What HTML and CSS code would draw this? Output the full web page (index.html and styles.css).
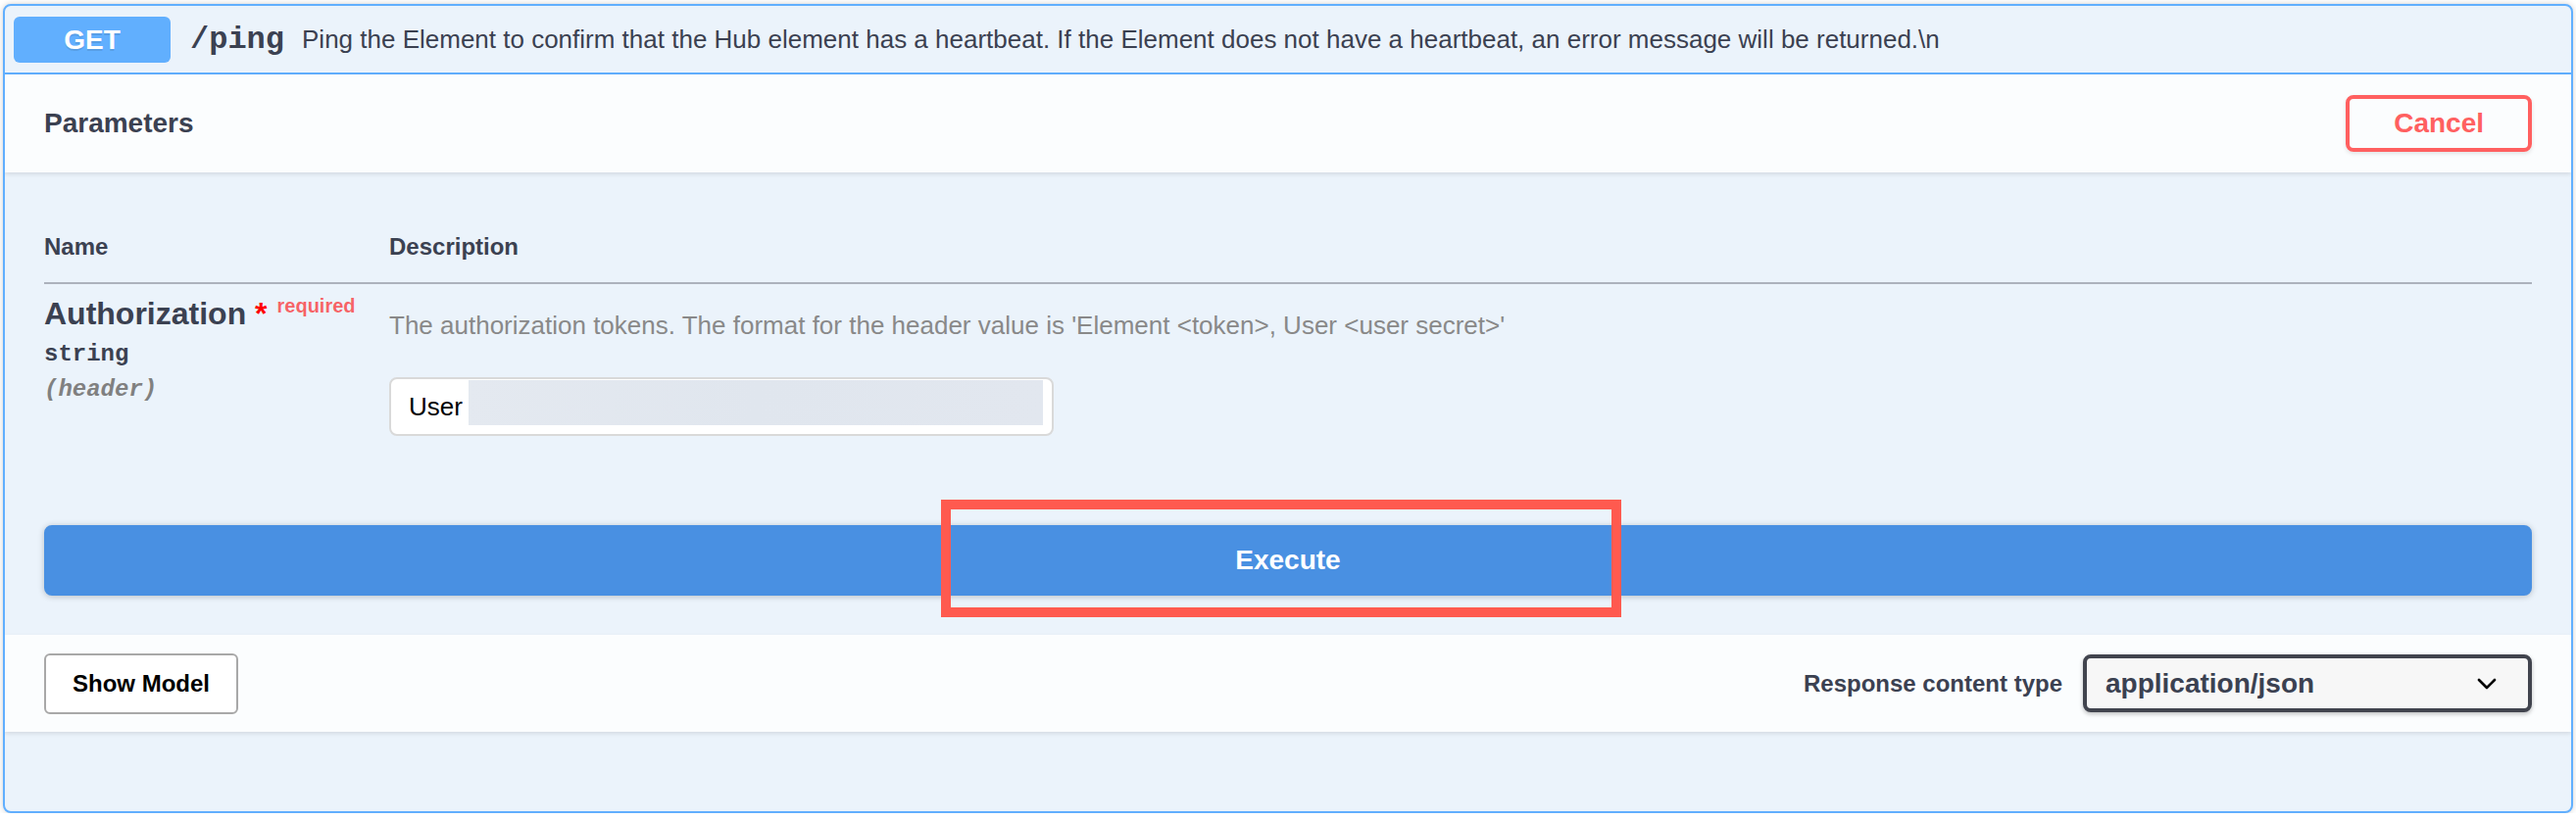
FILE: index.html
```html
<!DOCTYPE html>
<html lang="en">
<head>
<meta charset="utf-8">
<title>GET /ping</title>
<link rel="stylesheet" href="styles.css">
</head>
<body>
<div class="opblock">
  <div class="summary">
    <span class="method">GET</span>
    <span class="path">/ping</span>
    <div class="summary-desc">Ping the Element to confirm that the Hub element has a heartbeat. If the Element does not have a heartbeat, an error message will be returned.\n</div>
  </div>

  <div class="section-header">
    <h4 class="section-title">Parameters</h4>
    <button class="btn cancel">Cancel</button>
  </div>

  <div class="table-container">
    <table class="parameters">
      <colgroup>
        <col class="col-name">
        <col>
      </colgroup>
      <thead>
        <tr>
          <th class="col-header">Name</th>
          <th class="col-header">Description</th>
        </tr>
      </thead>
      <tbody>
        <tr>
          <td class="param-name-cell">
            <div class="param-name">Authorization<span class="star">&nbsp;*</span><span class="required">required</span></div>
            <div class="param-type">string</div>
            <div class="param-in">(header)</div>
          </td>
          <td class="param-desc-cell">
            <p class="param-desc">The authorization tokens. The format for the header value is 'Element &lt;token&gt;, User &lt;user secret&gt;'</p>
            <div class="text-input">
              <span class="input-value">User</span>
              <span class="redacted"></span>
            </div>
          </td>
        </tr>
      </tbody>
    </table>
  </div>

  <div class="execute-wrapper">
    <button class="btn execute">Execute</button>
  </div>

  <div class="section-header responses-header">
    <button class="btn model">Show Model</button>
    <div class="content-type">
      <span class="content-type-label">Response content type</span>
      <div class="select">
        <span class="select-value">application/json</span>
        <svg class="chevron" width="20" height="12" viewBox="0 0 20 12" aria-hidden="true">
          <polyline points="2,2 10,10 18,2" fill="none" stroke="#000" stroke-width="2.6" stroke-linecap="round" stroke-linejoin="round"/>
        </svg>
      </div>
    </div>
  </div>

  <div class="responses-body"></div>
</div>

<div class="annotation"></div>
</body>
</html>
```

FILE: styles.css
```css
* {
  box-sizing: border-box;
}

html, body {
  margin: 0;
  background: #ffffff;
}

body {
  position: relative;
  padding: 4px 3px 0 3px;
  font-family: "Liberation Sans", Arial, Helvetica, sans-serif;
  color: #3b4151;
}

.opblock {
  width: 100%;
  border: 2px solid #61affe;
  border-radius: 8px;
  background: #ebf3fb;
  box-shadow: 0 0 6px rgba(0, 0, 0, 0.19);
  overflow: hidden;
}

/* ---------- summary ---------- */
.summary {
  display: flex;
  align-items: center;
  height: 70px;
  padding: 10px 10px 10px 9px;
  border-bottom: 2px solid #61affe;
}

.method {
  min-width: 160px;
  height: 47px;
  line-height: 47px;
  padding: 0 30px;
  text-align: center;
  font-size: 28px;
  font-weight: 700;
  color: #ffffff;
  background: #61affe;
  border-radius: 6px;
  text-shadow: 0 2px 0 rgba(0, 0, 0, 0.1);
}

.path {
  padding: 0 18px 0 20px;
  font-family: "Liberation Mono", "Courier New", monospace;
  font-size: 32px;
  font-weight: 700;
  color: #3b4151;
}

.summary-desc {
  flex: 1;
  font-size: 26px;
  color: #3b4151;
  white-space: nowrap;
}

/* ---------- section header ---------- */
.section-header {
  display: flex;
  align-items: center;
  justify-content: space-between;
  height: 100px;
  padding: 0 40px;
  background: rgba(255, 255, 255, 0.8);
  box-shadow: 0 2px 4px rgba(0, 0, 0, 0.1);
}

.section-title {
  margin: 0;
  font-size: 28px;
  font-weight: 700;
  color: #3b4151;
}

.btn {
  font-family: "Liberation Sans", Arial, Helvetica, sans-serif;
  font-weight: 700;
  cursor: pointer;
}

.cancel {
  height: 58px;
  padding: 0 45px;
  font-size: 28px;
  line-height: 32px;
  color: #ff6060;
  background: transparent;
  border: 4px solid #ff6060;
  border-radius: 8px;
  box-shadow: 0 2px 4px rgba(0, 0, 0, 0.1);
}

/* ---------- parameters table ---------- */
.table-container {
  padding: 40px;
}

.parameters {
  width: 100%;
  border-collapse: collapse;
  table-layout: fixed;
}

.col-name {
  width: 352px;
}

.col-header {
  padding: 22px 0;
  text-align: left;
  font-size: 24px;
  line-height: 28px;
  font-weight: 700;
  color: #3b4151;
  border-bottom: 2px solid rgba(59, 65, 81, 0.2);
}

.param-name-cell,
.param-desc-cell {
  vertical-align: top;
  padding: 12px 0 11px;
}

.param-name {
  font-size: 32px;
  line-height: 37px;
  font-weight: 700;
  color: #3b4151;
  white-space: nowrap;
}

.star {
  color: #ff0000;
}

.required {
  position: relative;
  top: -12px;
  padding: 10px;
  font-size: 20px;
  color: rgba(255, 0, 0, 0.6);
}

.param-type {
  padding: 5px 0;
  font-family: "Liberation Mono", "Courier New", monospace;
  font-size: 24px;
  line-height: 27px;
  font-weight: 700;
  color: #3b4151;
}

.param-in {
  padding-top: 4px;
  font-family: "Liberation Mono", "Courier New", monospace;
  font-size: 24px;
  line-height: 27px;
  font-weight: 700;
  font-style: italic;
  color: #808080;
}

.param-desc {
  margin: 15px 0 0;
  font-size: 26px;
  line-height: 30px;
  color: #898989;
  white-space: nowrap;
}

.text-input {
  display: flex;
  align-items: center;
  width: 678px;
  height: 60px;
  margin-top: 38px;
  padding: 0 9px 0 18px;
  background: #ffffff;
  border: 2px solid #d9d9d9;
  border-radius: 8px;
}

.input-value {
  font-size: 26px;
  line-height: 30px;
  color: #000000;
}

.redacted {
  flex: 1;
  align-self: flex-start;
  height: 46px;
  margin: 1px 0 0 6px;
  background: linear-gradient(100deg, #e4e9f0 0%, #e0e6ee 50%, #e2e7ef 100%);
}

/* ---------- execute ---------- */
.execute-wrapper {
  padding: 40px;
}

.execute {
  display: block;
  width: 100%;
  height: 72px;
  font-size: 28px;
  line-height: 32px;
  color: #ffffff;
  background: #4990e2;
  border: 4px solid #4990e2;
  border-radius: 8px;
  box-shadow: 0 1px 6px rgba(0, 0, 0, 0.22);
}

/* ---------- responses header ---------- */
.responses-header {
  height: 99px;
}

.model {
  width: 198px;
  height: 62px;
  padding: 0;
  font-size: 24px;
  line-height: 30px;
  text-align: center;
  color: #000000;
  background: #ffffff;
  border: 2px solid #a8a8a8;
  border-radius: 6px;
}

.content-type {
  display: flex;
  align-items: center;
  gap: 21px;
}

.content-type-label {
  font-size: 24px;
  font-weight: 700;
  color: #3b4151;
}

.select {
  display: flex;
  align-items: center;
  justify-content: space-between;
  width: 458px;
  height: 59px;
  padding: 0 32px 0 19px;
  background: #f7f7f7;
  border: 4px solid #41444e;
  border-radius: 8px;
  box-shadow: 0 2px 4px rgba(0, 0, 0, 0.25);
}

.select-value {
  font-size: 28px;
  font-weight: 700;
  color: #3b4151;
}

.chevron {
  display: block;
}

.responses-body {
  height: 81px;
}

/* ---------- annotation overlay ---------- */
.annotation {
  position: absolute;
  left: 960px;
  top: 510px;
  width: 694px;
  height: 120px;
  border: 10px solid #ff5a4f;
  pointer-events: none;
}
```
